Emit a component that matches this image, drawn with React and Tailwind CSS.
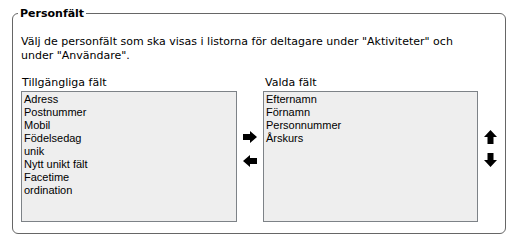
import React from "react";

const available = [
  "Adress",
  "Postnummer",
  "Mobil",
  "Födelsedag",
  "unik",
  "Nytt unikt fält",
  "Facetime",
  "ordination",
];

const selected = ["Efternamn", "Förnamn", "Personnummer", "Årskurs"];

function Arrow({ dir }) {
  // horizontal arrows are 14x12, vertical ones 13x14
  if (dir === "right") {
    return (
      <svg width="14" height="12" viewBox="0 0 14 12">
        <polygon points="0,3 7,3 7,0 14,6 7,12 7,9 0,9" fill="#000" />
      </svg>
    );
  }
  if (dir === "left") {
    return (
      <svg width="14" height="12" viewBox="0 0 14 12">
        <polygon points="14,3 7,3 7,0 0,6 7,12 7,9 14,9" fill="#000" />
      </svg>
    );
  }
  if (dir === "up") {
    return (
      <svg width="13" height="14" viewBox="0 0 13 14">
        <polygon points="3.5,14 3.5,7 0,7 6.5,0 13,7 9.5,7 9.5,14" fill="#000" />
      </svg>
    );
  }
  return (
    <svg width="13" height="14" viewBox="0 0 13 14">
      <polygon points="3.5,0 3.5,7 0,7 6.5,14 13,7 9.5,7 9.5,0" fill="#000" />
    </svg>
  );
}

function ListBox({ items, width }) {
  return (
    <div
      className={`${width} h-[131px] border border-[#7d8287] bg-[#eeeeee] pl-[2px] pt-[1px] font-['Liberation_Sans',Arial,sans-serif] text-[11px] leading-[13px] text-black`}
    >
      {items.map((item) => (
        <div key={item}>{item}</div>
      ))}
    </div>
  );
}

export default function App() {
  return (
    <div className="w-[520px] h-[243px] bg-white pl-[12px] pt-[7px] font-['DejaVu_Sans',Verdana,sans-serif] text-[11px] text-black">
      <fieldset className="w-[494px] h-[227px] border border-[#666666] rounded-[6px] p-0">
        <legend className="ml-[5px] px-[2px] font-bold leading-[13px]">
          Personfält
        </legend>

        <div className="px-[8px] pt-[15px]">
          <p className="leading-[14px]">
            Välj de personfält som ska visas i listorna för deltagare under "Aktiviteter" och
            <br />
            under "Användare".
          </p>

          <div className="mt-[13px] flex">
            {/* Available fields */}
            <div className="flex flex-col">
              <div className="leading-[14px] mb-[1px] pl-[1px]">Tillgängliga fält</div>
              <ListBox items={available} width="w-[216px]" />
            </div>

            {/* Move buttons */}
            <div className="w-[26px] flex flex-col items-center pt-[55px] gap-[12px]">
              <Arrow dir="right" />
              <Arrow dir="left" />
            </div>

            {/* Selected fields */}
            <div className="flex flex-col">
              <div className="leading-[14px] mb-[1px] pl-[2px]">Valda fält</div>
              <ListBox items={selected} width="w-[215px]" />
            </div>

            {/* Order buttons */}
            <div className="pl-[6px] flex flex-col pt-[54px] gap-[9px]">
              <Arrow dir="up" />
              <Arrow dir="down" />
            </div>
          </div>
        </div>
      </fieldset>
    </div>
  );
}
